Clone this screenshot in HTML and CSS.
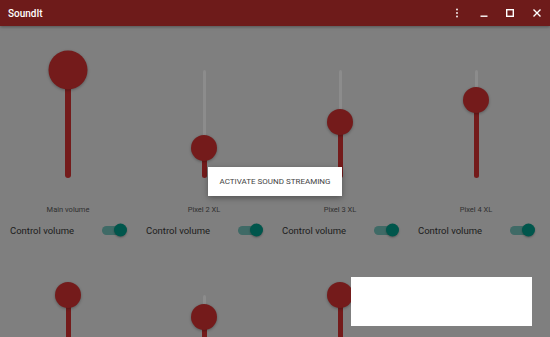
FILE: index.html
```html
<!DOCTYPE html>
<html lang="en">
<head>
    <meta charset="UTF-8">
    <meta name="viewport" content="width=device-width, initial-scale=1.0">
    <title>SoundIt</title>
    <link rel="stylesheet" href="styles.css">
</head>
<body>
    <div class="window">
        <div class="titlebar">
            <div class="app-title">SoundIt</div>
            <div class="window-buttons">
                <span class="win-btn">
                    <svg width="12" height="12" viewBox="0 0 12 12"><circle cx="6" cy="2.5" r="0.9" fill="#fff"/><circle cx="6" cy="6" r="0.9" fill="#fff"/><circle cx="6" cy="9.5" r="0.9" fill="#fff"/></svg>
                </span>
                <span class="win-btn">
                    <svg width="12" height="12" viewBox="0 0 12 12"><rect x="2.5" y="8.5" width="7" height="1.4" fill="#fff"/></svg>
                </span>
                <span class="win-btn">
                    <svg width="12" height="12" viewBox="0 0 12 12"><rect x="2.7" y="2.7" width="6.6" height="6.6" fill="none" stroke="#fff" stroke-width="1.4"/></svg>
                </span>
                <span class="win-btn">
                    <svg width="12" height="12" viewBox="0 0 12 12"><path d="M2.5 2.5 L9.5 9.5 M9.5 2.5 L2.5 9.5" stroke="#fff" stroke-width="1.4"/></svg>
                </span>
            </div>
        </div>

        <div class="content">
            <div class="device-grid">
                <div class="device">
                    <div class="slider-wrap">
                        <div class="slider main">
                            <div class="fill" style="height: 100%"></div>
                            <div class="knob big" style="bottom: 100%"></div>
                        </div>
                    </div>
                    <div class="device-name">Main volume</div>
                    <div class="control-row">
                        <span>Control volume</span>
                        <span class="toggle on"></span>
                    </div>
                </div>
                <div class="device">
                    <div class="slider-wrap">
                        <div class="slider">
                            <div class="fill" style="height: 28%"></div>
                            <div class="knob" style="bottom: 28%"></div>
                        </div>
                    </div>
                    <div class="device-name">Pixel 2 XL</div>
                    <div class="control-row">
                        <span>Control volume</span>
                        <span class="toggle on"></span>
                    </div>
                </div>
                <div class="device">
                    <div class="slider-wrap">
                        <div class="slider">
                            <div class="fill" style="height: 52%"></div>
                            <div class="knob" style="bottom: 52%"></div>
                        </div>
                    </div>
                    <div class="device-name">Pixel 3 XL</div>
                    <div class="control-row">
                        <span>Control volume</span>
                        <span class="toggle on"></span>
                    </div>
                </div>
                <div class="device">
                    <div class="slider-wrap">
                        <div class="slider">
                            <div class="fill" style="height: 72%"></div>
                            <div class="knob" style="bottom: 72%"></div>
                        </div>
                    </div>
                    <div class="device-name">Pixel 4 XL</div>
                    <div class="control-row">
                        <span>Control volume</span>
                        <span class="toggle on"></span>
                    </div>
                </div>

                <div class="device">
                    <div class="slider-wrap">
                        <div class="slider">
                            <div class="fill" style="height: 100%"></div>
                            <div class="knob" style="bottom: 100%"></div>
                        </div>
                    </div>
                    <div class="device-name">Pixel 5</div>
                    <div class="control-row">
                        <span>Control volume</span>
                        <span class="toggle on"></span>
                    </div>
                </div>
                <div class="device">
                    <div class="slider-wrap">
                        <div class="slider">
                            <div class="fill" style="height: 80%"></div>
                            <div class="knob" style="bottom: 80%"></div>
                        </div>
                    </div>
                    <div class="device-name">Pixel 3a</div>
                    <div class="control-row">
                        <span>Control volume</span>
                        <span class="toggle on"></span>
                    </div>
                </div>
                <div class="device">
                    <div class="slider-wrap">
                        <div class="slider">
                            <div class="fill" style="height: 100%"></div>
                            <div class="knob" style="bottom: 100%"></div>
                        </div>
                    </div>
                    <div class="device-name">Pixel 4a</div>
                    <div class="control-row">
                        <span>Control volume</span>
                        <span class="toggle on"></span>
                    </div>
                </div>
            </div>
        </div>

        <!-- popup menu -->
        <div class="menu">
            <div class="menu-item">ACTIVATE SOUND STREAMING</div>
        </div>

        <!-- toast -->
        <div class="toast"></div>
    </div>
</body>
</html>
```

FILE: styles.css
```css
* {
    margin: 0;
    padding: 0;
    box-sizing: border-box;
    font-family: Roboto, "Liberation Sans", sans-serif;
}

body {
    background-color: #7f7f7f;
    overflow: hidden;
}

.window {
    width: 550px;
    height: 337px;
    display: flex;
    flex-direction: column;
    position: relative;
    background-color: #7f7f7f;
}

.titlebar {
    height: 26px;
    flex-shrink: 0;
    background-color: #6e1b1a;
    display: flex;
    align-items: center;
    justify-content: space-between;
    padding-left: 8px;
    box-shadow: 0 1px 3px rgba(0, 0, 0, 0.35);
    position: relative;
    z-index: 2;
}

.app-title {
    color: #fff;
    font-size: 10px;
    font-weight: 500;
}

.window-buttons {
    display: flex;
}

.win-btn {
    width: 26.5px;
    height: 26px;
    display: flex;
    align-items: center;
    justify-content: center;
}

.content {
    flex: 1;
    overflow-y: auto;
}

.content::-webkit-scrollbar {
    width: 4px;
}

.content::-webkit-scrollbar-thumb {
    background-color: #8a8a8a;
}

.content::-webkit-scrollbar-track {
    background-color: transparent;
}

.device-grid {
    display: grid;
    grid-template-columns: repeat(4, 136px);
}

.device {
    height: 225px;
    padding-top: 44px;
    display: flex;
    flex-direction: column;
}

.slider-wrap {
    height: 108px;
    display: flex;
    justify-content: center;
}

.slider {
    width: 3px;
    height: 100%;
    background-color: #8c8c8c;
    border-radius: 2px;
    position: relative;
}

.fill {
    position: absolute;
    left: -1px;
    bottom: 0;
    width: 5px;
    border-radius: 3px;
    background-color: #741b1b;
}

.slider.main .fill {
    left: -1.5px;
    width: 6px;
}

.knob {
    position: absolute;
    left: 50%;
    width: 26px;
    height: 26px;
    border-radius: 50%;
    background-color: #741b1b;
    transform: translate(-50%, 50%);
    box-shadow: 0 1px 3px rgba(0, 0, 0, 0.3);
}

.knob.big {
    width: 39px;
    height: 39px;
}

.device-name {
    margin-top: 27px;
    text-align: center;
    font-size: 7.5px;
    line-height: 10px;
    color: #2f2f2f;
}

.control-row {
    margin-top: 7px;
    height: 16px;
    padding: 0 10px 0 10px;
    display: flex;
    align-items: center;
    justify-content: space-between;
    font-size: 9.5px;
    color: #1c1c1c;
}

.toggle {
    width: 24px;
    height: 9px;
    border-radius: 5px;
    background-color: #3f6a66;
    position: relative;
}

.toggle::after {
    content: '';
    position: absolute;
    right: -1px;
    top: 50%;
    width: 13px;
    height: 13px;
    border-radius: 50%;
    background-color: #00564c;
    transform: translateY(-50%);
    box-shadow: 0 1px 2px rgba(0, 0, 0, 0.3);
}

.menu {
    position: absolute;
    left: 208px;
    top: 167px;
    width: 134px;
    height: 29px;
    background-color: #fff;
    box-shadow: 0 2px 6px rgba(0, 0, 0, 0.35);
    display: flex;
    align-items: center;
    justify-content: center;
    z-index: 3;
}

.menu-item {
    font-size: 8px;
    color: #444;
}

.toast {
    position: absolute;
    left: 351px;
    top: 277px;
    width: 181px;
    height: 49px;
    background-color: #fff;
    z-index: 3;
}
```
